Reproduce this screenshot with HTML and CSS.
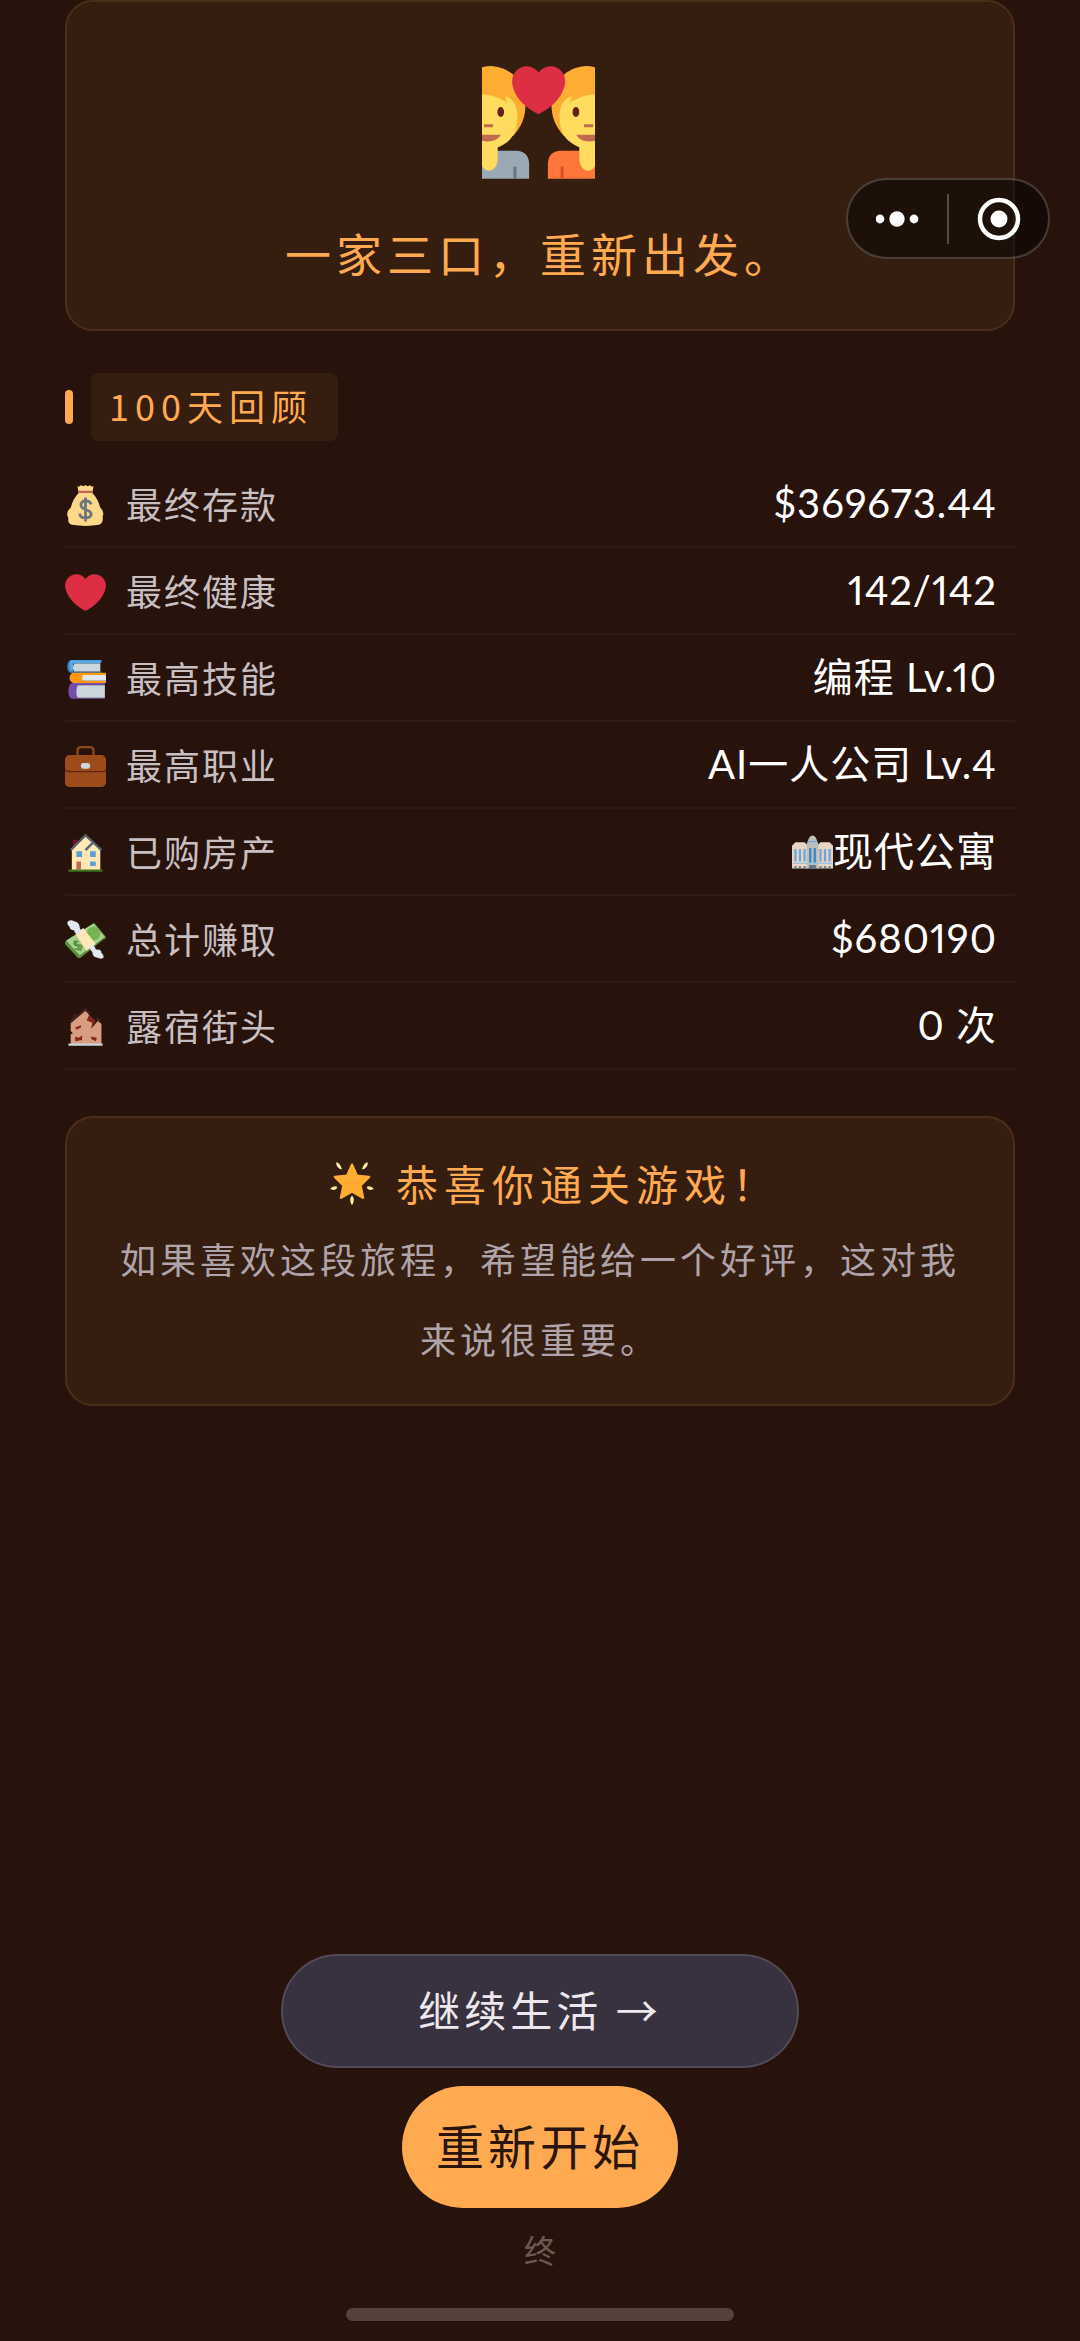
FILE: index.html
```
<!doctype html>

<html lang="zh-CN">
<head>
    <meta charset="utf-8">
    <meta name="viewport" content="width=device-width, initial-scale=1">

    <title>100天回顾</title>

    <link rel="stylesheet" href="styles.css">
</head>

<body>
    <div class="capsule">
        <button type="button" class="capsule-btn" aria-label="更多">
            <svg width="44" height="44" viewBox="0 0 44 44" fill="#fff">
                <circle cx="4" cy="22" r="4.400"/><circle cx="21" cy="22" r="7.700"/><circle cx="38" cy="22" r="4.400"/>
            </svg>
        </button>
        <button type="button" class="capsule-btn" aria-label="关闭">
            <svg width="44" height="44" viewBox="0 0 44 44">
                <circle cx="22" cy="22" r="19" fill="none" stroke="#fff" stroke-width="4.500"/><circle cx="22" cy="22" r="8.500" fill="#fff"/>
            </svg>
        </button>
    </div>

    <main>
        <section class="card ending">
            <svg class="couple" viewBox="66 47 338 337">
                <path fill="#ffac33" d="M66 50Q84 46 100 47C150 52 192 90 196 150C198 200 185 225 160 255L66 260z"/>
                <path fill="#ffdc5d" d="M66 132C90 128 125 148 134 150Q144 158 145 170L135 136C160 144 172 165 172 200C172 250 150 275 112 290L66 290z"/>
                <path fill="#9aaab4" d="M66 300H172Q206 304 207 340V384H66z"/>
                <path fill="#66757f" d="M160 384V350Q164 343 169 350V384z"/>
                <path fill="#ffdc5d" d="M66 270H113V325C112 350 98 360 86 360Q72 359 66 345z"/>
                <ellipse cx="122" cy="184" rx="10" ry="15" fill="#662113"/>
                <path fill="#c1694f" d="M72 221H99V230H72zM66 252H122C114 268 92 276 66 270z"/>
                <path fill="#ffac33" d="M404 50Q386 46 370 47C320 52 278 90 274 150C272 200 285 225 310 255L404 260z"/>
                <path fill="#ffdc5d" d="M404 132C380 128 345 148 336 150Q326 158 325 170L335 136C310 144 298 165 298 200C298 250 320 275 358 290L404 290z"/>
                <path fill="#ff763b" d="M404 300H298Q264 304 263 340V384H404z"/>
                <path fill="#d65125" d="M310 384V350Q306 343 301 350V384z"/>
                <path fill="#ffdc5d" d="M404 270H357V325C358 350 372 360 384 360Q398 359 404 345z"/>
                <ellipse cx="347" cy="184" rx="10" ry="15" fill="#662113"/>
                <path fill="#c1694f" d="M398 221H371V230H398zM404 252H348C356 268 378 276 404 270z"/>
                <path fill="#dd2e44" d="M235 190C205 178 157 140 156 92C156 66 176 47 200 47Q222 48 235 66Q248 48 271 47C295 47 315 66 315 92C313 140 265 178 235 190z"/>
            </svg>
            <p class="ending-text">一家三口，重新出发。</p>
        </section>

        <h2 class="section-title"><span>100天回顾</span></h2>

        <table class="stats">
            <tr>
                <th scope="row">
                    <svg viewBox="0 0 36 36">
                        <path fill="#fdd888" d="M12 7L11 1Q13 2 14 0Q16 2 18 0Q20 2 22 0Q23 2 25 1L24 7Q29 12 31 20Q35 23 33 28Q34 33 30 35Q18 37 6 35Q2 34 3 29Q0 24 5 20Q7 12 12 7z"/>
                        <path fill="#bf6952" d="M12 5h12q1 1 0 2H12q-1-1 0-2z"/>
                        <path fill="none" stroke="#67757f" stroke-width="2.400" d="M23 17Q22 14 18 14Q14 14 14 17.500Q14 20 18 21.500Q23 23 23 26Q22 29 18 29Q13 29 13 25M18 11v21"/>
                    </svg>
                    最终存款
                </th>
                <td>$369673.44</td>
            </tr>
            <tr>
                <th scope="row">
                    <svg viewBox="0 0 36 36">
                        <path fill="#dd2e44" d="M35.885 11.833c0-5.450-4.418-9.868-9.867-9.868-3.308 0-6.227 1.633-8.018 4.129-1.791-2.496-4.710-4.129-8.017-4.129-5.450 0-9.868 4.417-9.868 9.868 0 .772.098 1.520.266 2.241C1.751 22.587 11.216 31.568 18 34.034c6.783-2.466 16.249-11.447 17.617-19.959.170-.721.268-1.469.268-2.242z"/>
                    </svg>
                    最终健康
                </th>
                <td>142/142</td>
            </tr>
            <tr>
                <th scope="row">
                    <svg viewBox="0 0 36 36">
                        <path fill="#3b88c3" d="M5 1h27v2H7v8h25v1H5Q2 11 2 7Q2 2 5 1z"/>
                        <path fill="#55acee" d="M5 1h27l-1 3H7v6h-2Q3 6 5 1z"/>
                        <path fill="#ccd6dd" d="M8 4h23v7H8Q6 8 8 4z"/>
                        <path fill="#ff9a0c" d="M7 12h29v2H16v5h20v2H7Q4 20 4 17Q4 13 7 12z"/>
                        <path fill="#e1e8ed" d="M16 14h20v5H16Q14 17 16 14z"/>
                        <path fill="#744eaa" d="M6 21h29v2H11v11h24v1H6Q3 34 3 28Q3 22 6 21z"/>
                        <path fill="#ccd6dd" d="M11 23h24v11H11Q9 29 11 23z"/>
                    </svg>
                    最高技能
                </th>
                <td>编程 Lv.10</td>
            </tr>
            <tr>
                <th scope="row">
                    <svg viewBox="0 0 36 36">
                        <path fill="none" stroke="#8a4b1c" stroke-width="2" d="M11 8V4Q11 1 14 1h8q3 0 3 3v4"/>
                        <rect y="8" width="36" height="28" rx="4" fill="#9b4c18"/>
                        <path fill="#662113" d="M0 20q1 2 4 2h28q3 0 4-2v2q-1 1-4 1H4q-3 0-4-1z"/>
                        <rect x="14" y="15" width="8" height="5" rx="2" fill="#ccd6dd"/>
                    </svg>
                    最高职业
                </th>
                <td>AI一人公司 Lv.4</td>
            </tr>
            <tr>
                <th scope="row">
                    <svg viewBox="0 0 36 36">
                        <path fill="#77102b" d="M7 6h4v8H7z"/>
                        <path fill="#ffe8b6" d="M6 14L18 3l13 11v19H6z"/>
                        <path fill="none" stroke="#55636e" stroke-width="2" d="M5 15L18 2l14 13M18 15l7-7"/>
                        <path fill="#5c9dd5" d="M10 16h5v5h-5zM22 16h5v5h-5zM22 25h5v4h-5z"/>
                        <path fill="#c1694f" d="M10 25h4v7h-4z"/>
                        <path fill="#3e721d" d="M3 32h30v2H3z"/>
                    </svg>
                    已购房产
                </th>
                <td>
                    <svg viewBox="0 0 36 36">
                        <path fill="#e8d5c3" d="M0 12L3 9h8l3 3v20H0zM22 12l3-3h8l3 3v20H22z"/>
                        <path fill="#bdbdb9" d="M13 10l2-5q3-4 6 0l2 5v22H13z"/>
                        <path fill="#6ba7d8" d="M2 15h2v11H2zM6 15h2v11H6zM10 15h2v11h-2zM24 15h2v11h-2zM28 15h2v11h-2zM32 15h2v11h-2zM14 8h8v1h-8z"/>
                        <path fill="#3b88c3" d="M15 14h2v13h-2zM19 14h2v13h-2z"/>
                        <path fill="#62788a" d="M2 30h2v2H2zM6 30h2v2H6zM10 30h2v2h-2zM15 29h6v3h-6zM24 30h2v2h-2zM28 30h2v2h-2zM32 30h2v2h-2z"/>
                        <path fill="#9dc4df" d="M1 27h34v1H1z"/>
                    </svg>现代公寓
                </td>
            </tr>
            <tr>
                <th scope="row">
                    <svg viewBox="0 0 36 36">
                        <path fill="#5c913b" d="M0 19L25 3q1-1 2 1l9 11q0 2-2 2L14 33q-2 1-3 0L0 21z"/>
                        <path fill="#a7d28b" d="M1 18L25 3l10 12-22 16z"/>
                        <circle cx="25" cy="12" r="6" fill="#77b255"/>
                        <path fill="#ffe8b6" d="M9 12l7-5 11 14-8 6z"/>
                        <path fill="none" stroke="#5c913b" stroke-width="1.500" d="M12 19q-4-1-4 2 1 2 4 1 4 0 2 3-2 2-5 0M8 18l6 9"/>
                        <path fill="#e1e8ed" d="M2 2Q4-1 8 1q5 1 5 6 2 3 0 6-5-1-5-4-4 0-4-3-2-1-2-4zM34 33q-2 2-6 0-4-1-4-5-3-2-2-7 5 2 5 5 5-1 5 3 2 1 2 4z"/>
                    </svg>
                    总计赚取
                </th>
                <td>$680190</td>
            </tr>
            <tr>
                <th scope="row">
                    <svg viewBox="0 0 36 36">
                        <path fill="#4b1820" d="M7 6h3l1 7-4 2z"/>
                        <path fill="#d99e82" d="M5 14L18 3l4 5-2 4 5 2-2 5 6-7 3 3v18H5v-9l2-1-2-2z"/>
                        <path fill="none" stroke="#3e2523" stroke-width="2" d="M5 13L18 2l4 4M28 10l3 3"/>
                        <path fill="#84281c" d="M21 7l6 5-4 7 1-6-5-1zM9 18l5-2v2l-4 2zM9 26l3 1 3-2v4l-6 1zM23 26l5 1-1 3-4-2z"/>
                        <path fill="#ccd6dd" d="M3 32h30v2H3z"/>
                    </svg>
                    露宿街头
                </th>
                <td>0 次</td>
            </tr>
        </table>

        <section class="card review">
            <h3>
                <svg viewBox="0 0 36 36">
                    <path fill="#ffac33" stroke="#ffac33" stroke-width="2" stroke-linejoin="round" d="M18 3l4 9 10 1-7 7 2 10-9-5-9 5 2-10-7-7 10-1z"/>
                    <path fill="#ffe8a6" d="M5 1q3 0 5 6-5-1-5-6zM31 1q-3 0-5 6 5-1 5-6zM0 23q2-3 6-2-1 4-6 2zM36 23q-2-3-6-2 1 4 6 2zM18 28q3 4 0 8-3-4 0-8z"/>
                </svg>
                恭喜你通关游戏！
            </h3>
            <p>如果喜欢这段旅程，希望能给一个好评，这对我来说很重要。</p>
        </section>
    </main>

    <footer>
        <button type="button" class="btn continue">继续生活 →</button>
        <button type="button" class="btn restart">重新开始</button>
        <p class="fin">终</p>
        <div class="home-bar"></div>
    </footer>
</body>
</html>
```
FILE: styles.css
```
* { box-sizing: border-box; }
body {
    display: flex;
    flex-direction: column;
    min-height: 100vh;
    margin: 0;
    padding: 0 65px;
    background: #27130b;
    color: #fff;
    font-family: "Noto Sans CJK SC", sans-serif;
    font-size: 36px;
}
h2, h3, p { margin: 0; font-weight: normal; }
button { font-family: inherit; cursor: pointer; }

main { flex: 1; }

.card {
    border: 2px solid #4b2e19;
    border-radius: 28px;
    background: #351e0f;
    text-align: center;
}

.ending { padding: 64px 36px 44px; }
.couple {
    width: 113px; height: 113px;
    margin: 0 4px 40px 0;
    vertical-align: top;
}
.ending-text {
    color: #ffaa50;
    font-size: 46px;
    line-height: 66px;
    letter-spacing: 5px;
}

.section-title {
    display: flex;
    align-items: center;
    gap: 18px;
    margin: 42px 0 20px;
    color: #ffaa50;
    font-size: 36px;
    line-height: 64px;
    letter-spacing: 6px;
}
.section-title::before {
    content: '';
    width: 8px; height: 34px;
    border-radius: 4px;
    background: #ffaa50;
}
.section-title span {
    padding: 0 25px 4px 18px;
    border-radius: 8px;
    background: #351e0f;
}

.stats { width: 100%; border-spacing: 0; }
.stats th, .stats td {
    height: 87px;
    padding: 0 0 2px;
    border-bottom: 2px solid #2f1b13;
    vertical-align: middle;
}
.stats th {
    color: #c8bfc2;
    font-weight: normal;
    line-height: 48px;
    letter-spacing: 2px;
    text-align: left;
}
.stats td {
    padding-right: 18px;
    font-family: Lato, "Noto Sans CJK SC", sans-serif;
    font-size: 40px;
    line-height: 48px;
    font-variant-numeric: proportional-nums;
    letter-spacing: 1px;
    text-align: right;
}
.stats svg { width: 41px; height: 41px; vertical-align: -7px; }
.stats th svg { margin-right: 10px; }

.review { margin-top: 46px; padding: 38px 36px 26px; }
.review h3 {
    display: flex;
    justify-content: center;
    align-items: center;
    gap: 22px;
    margin-bottom: 8px;
    padding-left: 30px;
    color: #ffaa50;
    font-size: 42px;
    line-height: 54px;
    letter-spacing: 6px;
}
.review h3 svg { width: 44px; height: 44px; }
.review p {
    color: #b0a4ab;
    line-height: 80px;
    letter-spacing: 4px;
}

footer {
    display: flex;
    flex-direction: column;
    align-items: center;
    padding-bottom: 20px;
}
.btn { padding: 0 0 6px; border: 0; border-radius: 62px; }
.continue {
    width: 518px; height: 114px;
    margin-bottom: 18px;
    border: 2px solid #534a58;
    background: #383240;
    color: #ece8ee;
    font-size: 42px;
    letter-spacing: 4px;
}
.restart {
    width: 276px; height: 122px;
    background: #ffaa50;
    color: #2b1409;
    font-size: 48px;
    letter-spacing: 4px;
}
.fin {
    margin: 18px 0 36px;
    color: #6a5a52;
    font-size: 32px;
    line-height: 46px;
}
.home-bar {
    width: 388px; height: 13px;
    border-radius: 7px;
    background: #55423a;
}

.capsule {
    position: fixed; top: 178px; right: 30px;
    display: flex;
    align-items: center;
    width: 204px; height: 81px;
    border: 2px solid #ffffff33;
    border-radius: 40px;
    background: #00000070;
    z-index: 10;
}
.capsule-btn {
    display: flex;
    flex: 1;
    align-items: center;
    justify-content: center;
    height: 50px;
    padding: 0;
    border: 0;
    background: none;
}
.capsule-btn + .capsule-btn { border-left: 2px solid #ffffff40; }
```
